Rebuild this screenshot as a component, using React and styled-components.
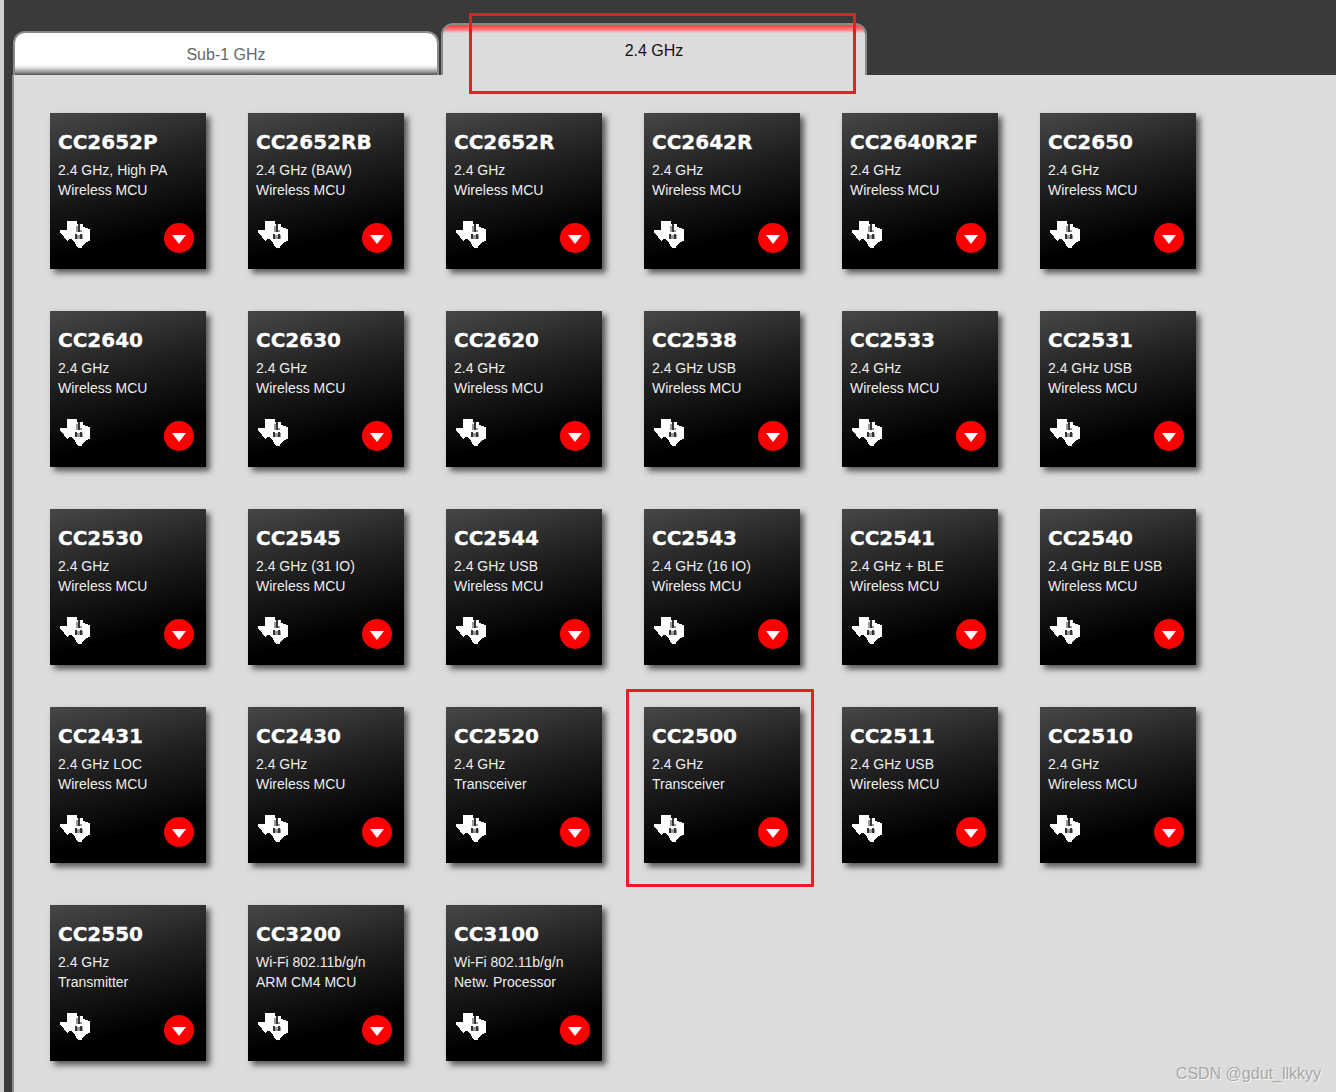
import styled, { createGlobalStyle } from "styled-components"

const GlobalStyle = createGlobalStyle`
html, body {
  margin: 0;
  padding: 0;
  background: #dcdcdc;
  font-family: "Liberation Sans", Arial, sans-serif;
}
`

const Page = styled.div`
position: relative;
width: 1336px;
height: 1092px;
overflow: hidden;
display: flex;
background: #dcdcdc;
`
const SideEdge = styled.div`
width: 4px;
flex: none;
background: #d0d0d0;
`
const Main = styled.div`
flex: 1;
display: flex;
flex-direction: column;
background: #3a3a3a;
`
const TabBar = styled.div`
height: 75px;
flex: none;
display: flex;
align-items: flex-end;
gap: 2px;
padding-left: 9px;
box-sizing: border-box;
`
const Tab = styled.div`
box-sizing: border-box;
width: 426px;
height: ${p => p.$active ? "52px" : "44px"};
border: 2px solid #8a8a8a;
border-bottom: none;
border-radius: 12px 12px 0 0;
text-align: center;
font-size: 16px;
color: ${p => p.$active ? "#111" : "#666"};
padding-top: ${p => p.$active ? "17px" : "13px"};
line-height: 18px;
background: ${p => p.$active
  ? "linear-gradient(#ff3c3c 0, #ff8080 5px, #dcdcdc 8px)"
  : "linear-gradient(#fff 0, #fff 31px, #eee 34px, #aaa 38px, #555 42px)"};
`
const Content = styled.div`
flex: 1;
background: #dcdcdc;
margin-left: 8px;
border-left: 2px solid #8a8a8a;
padding: 38px 0 0 36px;
`
const Grid = styled.div`
display: grid;
grid-template-columns: repeat(6, 156px);
grid-auto-rows: 156px;
gap: 42px;
`
const Card = styled.div`
box-sizing: border-box;
padding: 17px 8px 0;
color: #fff;
background: linear-gradient(165deg, #474747 0%, #1e1e1e 40%, #000 75%);
box-shadow: 4px 4px 6px #555;
`
const Name = styled.div`
font: bold 20px/24px "DejaVu Sans", Verdana, sans-serif;
-webkit-text-stroke: 0.3px #fff;
margin-bottom: 6px;
`
const Desc = styled.div`
font-size: 14px;
line-height: 20px;
color: #eee;
white-space: nowrap;
`
const Footer = styled.div`
display: flex;
justify-content: space-between;
align-items: flex-start;
margin-top: 20px;
padding: 0 4px 0 2px;
`
const Logo = styled.svg`
width: 30px;
height: 28px;
margin-top: 1px;
`
const Arrow = styled.div`
width: 30px;
height: 30px;
margin-top: 3px;
border-radius: 50%;
background: #f00;
display: flex;
align-items: center;
justify-content: center;
&::after {
  content: "";
  margin-top: 2px;
  border-left: 7px solid transparent;
  border-right: 7px solid transparent;
  border-top: 9px solid #fff;
}
`
const Mark = styled.div`
position: absolute;
box-sizing: border-box;
border: 3px solid #ed1c24;
left: ${p => p.$x}px;
top: ${p => p.$y}px;
width: ${p => p.$w}px;
height: ${p => p.$h}px;
`
const Watermark = styled.div`
position: absolute;
right: 15px;
bottom: 9px;
font-size: 16px;
color: #a8a8a8;
text-shadow: 1px 1px 0 #f4f4f4;
`

// Texas outline, blocky on purpose, the reference logo is a low-res bitmap
const TiLogo = () => (
  <Logo viewBox="0 0 30 28" shapeRendering="crispEdges">
    <path
      fill="#fff"
      d="M7 0H17V3H23V6L30 8V20L26 21L23 24L22 27H18L15 22L12 18H9L7 20L4 16L0 12V9H7Z"
    />
    <path fill="#333" d="M18 3h2v8h-2zM15 13h2v5h-2zM20 13h2v5h-2z" />
    <path fill="#9a9a9a" d="M16 5h2v6h-2zM20 9h2v2h-2zM17 14h3v4h-3zM22 14h1v4h-1z" />
  </Logo>
)

const chips = [
  ["CC2652P", "2.4 GHz, High PA", "Wireless MCU"],
  ["CC2652RB", "2.4 GHz (BAW)", "Wireless MCU"],
  ["CC2652R", "2.4 GHz", "Wireless MCU"],
  ["CC2642R", "2.4 GHz", "Wireless MCU"],
  ["CC2640R2F", "2.4 GHz", "Wireless MCU"],
  ["CC2650", "2.4 GHz", "Wireless MCU"],
  ["CC2640", "2.4 GHz", "Wireless MCU"],
  ["CC2630", "2.4 GHz", "Wireless MCU"],
  ["CC2620", "2.4 GHz", "Wireless MCU"],
  ["CC2538", "2.4 GHz USB", "Wireless MCU"],
  ["CC2533", "2.4 GHz", "Wireless MCU"],
  ["CC2531", "2.4 GHz USB", "Wireless MCU"],
  ["CC2530", "2.4 GHz", "Wireless MCU"],
  ["CC2545", "2.4 GHz (31 IO)", "Wireless MCU"],
  ["CC2544", "2.4 GHz USB", "Wireless MCU"],
  ["CC2543", "2.4 GHz (16 IO)", "Wireless MCU"],
  ["CC2541", "2.4 GHz + BLE", "Wireless MCU"],
  ["CC2540", "2.4 GHz BLE USB", "Wireless MCU"],
  ["CC2431", "2.4 GHz LOC", "Wireless MCU"],
  ["CC2430", "2.4 GHz", "Wireless MCU"],
  ["CC2520", "2.4 GHz", "Transceiver"],
  ["CC2500", "2.4 GHz", "Transceiver"],
  ["CC2511", "2.4 GHz USB", "Wireless MCU"],
  ["CC2510", "2.4 GHz", "Wireless MCU"],
  ["CC2550", "2.4 GHz", "Transmitter"],
  ["CC3200", "Wi-Fi 802.11b/g/n", "ARM CM4 MCU"],
  ["CC3100", "Wi-Fi 802.11b/g/n", "Netw. Processor"],
]

const App = () => {
  return (
    <Page>
      <GlobalStyle />
      <SideEdge />
      <Main>
        <TabBar>
          <Tab>Sub-1 GHz</Tab>
          <Tab $active>2.4 GHz</Tab>
        </TabBar>
        <Content>
          <Grid>
            {chips.map(([name, line1, line2]) => (
              <Card key={name}>
                <Name>{name}</Name>
                <Desc>{line1}</Desc>
                <Desc>{line2}</Desc>
                <Footer>
                  <TiLogo />
                  <Arrow />
                </Footer>
              </Card>
            ))}
          </Grid>
        </Content>
      </Main>
      <Mark $x={469} $y={13} $w={387} $h={81} />
      <Mark $x={626} $y={689} $w={188} $h={198} />
      <Watermark>CSDN @gdut_llkkyy</Watermark>
    </Page>
  )
}

export default App
